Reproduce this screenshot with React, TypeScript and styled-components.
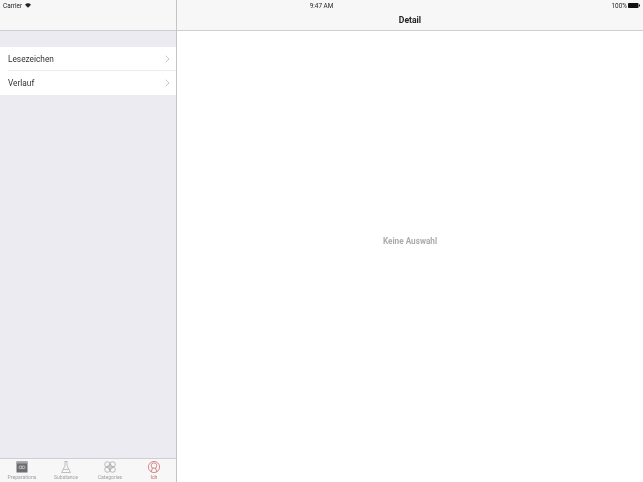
import React from 'react';
import styled, { createGlobalStyle } from 'styled-components';

const GlobalStyle = createGlobalStyle`
  html, body { margin: 0; padding: 0; background: #fff; }
  body { font-family: Roboto, "Liberation Sans", Arial, sans-serif; }
`;

const Screen = styled.div`
  position: relative;
  width: 643px;
  height: 482px;
  display: flex;
  overflow: hidden;
  filter: blur(0.3px);
`;

const StatusBar = styled.div`
  position: absolute;
  inset: 0 0 auto 0;
  height: 11px;
  padding: 0 3px;
  display: grid;
  grid-template-columns: 1fr auto 1fr;
  align-items: center;
  font-size: 6.4px;
  color: #222;
`;

const StatusLeft = styled.div`
  display: flex;
  align-items: center;
  gap: 3px;
`;

const StatusRight = styled.div`
  display: flex;
  align-items: center;
  justify-content: flex-end;
  gap: 1px;
`;

const Sidebar = styled.aside`
  width: 177px;
  flex: none;
  box-sizing: border-box;
  border-right: 1px solid #c4c4c8;
  background: #ebebf1;
  display: flex;
  flex-direction: column;
`;

const NavBar = styled.header`
  height: 25px;
  flex: none;
  background: #f7f7f8;
  border-bottom: 1px solid #cfcfd3;
  display: flex;
  align-items: flex-end;
  justify-content: center;
  padding-bottom: 5px;
  font-size: 8.6px;
  font-weight: 700;
  color: #222;
`;

const List = styled.ul`
  list-style: none;
  margin: 16px 0 0;
  padding: 0;
  background: #fff;
`;

const Row = styled.li`
  height: 24px;
  display: flex;
  align-items: center;
  justify-content: space-between;
  margin-left: 8px;
  padding-right: 6px;
  font-size: 8.3px;
  color: #333;
  & + & { box-shadow: 0 -1px 0 #ececef; }
`;

const Spacer = styled.div`
  flex: 1;
`;

const TabBar = styled.nav`
  height: 23px;
  flex: none;
  background: #f7f7f8;
  border-top: 1px solid #cfcfd3;
  display: grid;
  grid-template-columns: repeat(4, 44px);
`;

const Tab = styled.div<{ $active?: boolean }>`
  display: flex;
  flex-direction: column;
  align-items: center;
  padding-top: 2px;
  font-size: 5.1px;
  line-height: 7px;
  color: ${p => (p.$active ? '#c8625f' : '#a0a0a4')};
  svg { display: block; margin-bottom: 1px; }
`;

const Detail = styled.main`
  flex: 1;
  display: flex;
  flex-direction: column;
  background: #fff;
`;

const DetailBody = styled.div`
  flex: 1;
  padding-bottom: 31px;
  display: flex;
  align-items: center;
  justify-content: center;
  font-size: 8.2px;
  font-weight: 700;
  color: #ababab;
`;

const Chevron = () => (
  <svg width="5" height="8" viewBox="0 0 5 8" fill="none" stroke="#c7c7cc" strokeWidth="1">
    <path d="M0.7 0.7 L4 4 L0.7 7.3" />
  </svg>
);

const Wifi = () => (
  <svg width="6" height="5" viewBox="0 0 7 5" fill="#222">
    <path d="M0 1.5 C2 -0.5 5 -0.5 7 1.5 L3.5 5 Z" />
  </svg>
);

const Battery = () => (
  <svg width="12" height="5" viewBox="0 0 12 5" fill="#111">
    <rect x="0" y="0" width="10.5" height="5" rx="0.8" />
    <rect x="11" y="1.5" width="1" height="2" />
  </svg>
);

const PreparationsIcon = () => (
  <svg width="12" height="12" viewBox="0 0 12 12">
    <rect x="0.5" y="0.5" width="11" height="11" fill="#6d6d70" />
    <rect x="0.5" y="0.5" width="11" height="2" fill="#a5a5a8" />
    <rect x="3" y="5" width="3.2" height="2.6" rx="1.2" fill="none" stroke="#d8d8da" strokeWidth="0.7" />
    <rect x="5.8" y="5" width="3.2" height="2.6" rx="1.2" fill="none" stroke="#d8d8da" strokeWidth="0.7" />
  </svg>
);

const SubstanceIcon = () => (
  <svg width="12" height="12" viewBox="0 0 12 12" fill="none" stroke="#a8a8ac" strokeWidth="0.7">
    <path d="M4.6 0.5 H7.4 M5 0.5 V4.5 L1.6 11.5 H10.4 L7 4.5 V0.5" />
    <path d="M3.2 8.4 H8.8" />
  </svg>
);

const CategoriesIcon = () => (
  <svg width="12" height="12" viewBox="0 0 12 12" fill="none" stroke="#a0a0a4" strokeWidth="0.7">
    <circle cx="3.4" cy="3.4" r="2.7" />
    <circle cx="8.6" cy="3.4" r="2.7" />
    <circle cx="3.4" cy="8.6" r="2.7" />
    <circle cx="8.6" cy="8.6" r="2.7" />
    <path d="M6 2.8 L9.2 6 L6 9.2 L2.8 6 Z" />
  </svg>
);

const PersonIcon = () => (
  <svg width="12" height="12" viewBox="0 0 12 12" fill="none" stroke="#c8625f" strokeWidth="0.7">
    <circle cx="6" cy="6" r="5.6" />
    <circle cx="6" cy="4.6" r="2.8" />
    <path d="M4.4 7 L3.2 11 M7.6 7 L8.8 11" />
  </svg>
);

const rows = ['Lesezeichen', 'Verlauf'];

const tabs = [
  { label: 'Preparations', icon: <PreparationsIcon /> },
  { label: 'Substance', icon: <SubstanceIcon /> },
  { label: 'Categories', icon: <CategoriesIcon /> },
  { label: 'Ich', icon: <PersonIcon />, active: true },
];

export default function App() {
  return (
    <Screen>
      <GlobalStyle />
      <Sidebar>
        <NavBar />
        <List>
          {rows.map(r => (
            <Row key={r}>
              {r}
              <Chevron />
            </Row>
          ))}
        </List>
        <Spacer />
        <TabBar>
          {tabs.map(t => (
            <Tab key={t.label} $active={t.active}>
              {t.icon}
              {t.label}
            </Tab>
          ))}
        </TabBar>
      </Sidebar>
      <Detail>
        <NavBar>Detail</NavBar>
        <DetailBody>Keine Auswahl</DetailBody>
      </Detail>
      <StatusBar>
        <StatusLeft>
          Carrier
          <Wifi />
        </StatusLeft>
        <span>9:47 AM</span>
        <StatusRight>
          100%
          <Battery />
        </StatusRight>
      </StatusBar>
    </Screen>
  );
}
